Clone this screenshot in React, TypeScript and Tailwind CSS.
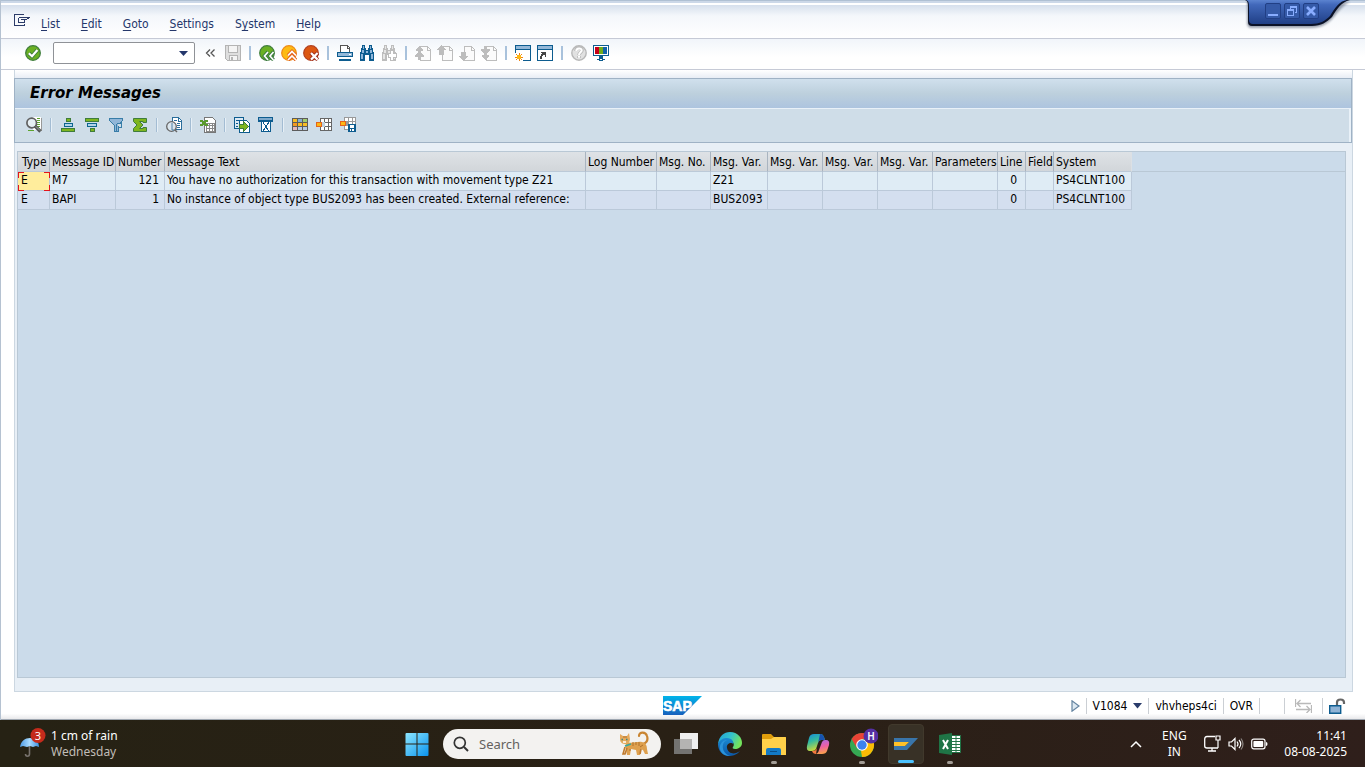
import React from "react";

const sapFont = "font-['DejaVu_Sans_Condensed','Liberation_Sans',sans-serif]";

type IconProps = { children: React.ReactNode; w?: number; h?: number; crisp?: boolean };

function Icon({ children, w = 16, h = 16, crisp = false }: IconProps) {
  return (
    <svg
      width={w}
      height={h}
      viewBox={`0 0 ${w} ${h}`}
      fill="none"
      shapeRendering={crisp ? "crispEdges" : "auto"}
      className="block shrink-0"
      aria-hidden="true"
    >
      {children}
    </svg>
  );
}

function ToolButton({ label, children, disabled }: { label: string; children: React.ReactNode; disabled?: boolean }) {
  return (
    <button type="button" aria-label={label} disabled={disabled} className="block size-4 shrink-0">
      {children}
    </button>
  );
}

function Separator() {
  return (
    <span className="flex w-1.5 shrink-0 justify-center">
      <span className="h-3.5 w-0.5 bg-[#a9c2dc]" />
    </span>
  );
}

function AppSeparator() {
  return <span className="h-3.5 w-0.5 shrink-0 border-r border-[#e6eff6] bg-[#a3bcd3]" />;
}

const Enter = () => (
  <Icon>
    <circle cx="8" cy="8" r="7.3" fill="#6ab023" stroke="#3f7d3c" strokeWidth="1.3" />
    <path d="M3.8 8.2 7 11.2 12.4 5" stroke="#3f7d3c" strokeWidth="4" />
    <path d="M3.8 8.2 7 11.2 12.4 5" stroke="#fff" strokeWidth="2.2" />
  </Icon>
);

const Save = () => (
  <Icon crisp>
    <path d="M.5.5h15v15h-13l-2-2z" fill="#dedede" stroke="#b4b4b4" />
    <path d="M3.500.5h9v7h-9z" fill="#f4f4f4" stroke="#b4b4b4" />
    <path d="M4.500 10.500h8v5h-8z" fill="#f4f4f4" stroke="#b4b4b4" />
    <path d="M6 12h2v3H6z" fill="#b4b4b4" />
  </Icon>
);

const Back = () => (
  <Icon>
    <circle cx="8" cy="8" r="7.3" fill="#6ab023" stroke="#3f7d3c" strokeWidth="1.2" />
    <path d="M9 7 5.5 11 9 15M14.5 7 11 11l3.5 4" stroke="#3a7a40" strokeWidth="3.6" />
    <path d="M9 7 5.5 11 9 15M14.5 7 11 11l3.5 4" stroke="#fff" strokeWidth="1.7" />
  </Icon>
);

const Exit = () => (
  <Icon>
    <circle cx="8" cy="8" r="7.3" fill="#fdbb12" stroke="#ee8a17" strokeWidth="1.2" />
    <path d="M7 10.5 11 6.5l4 4M7 15l4-4 4 4" stroke="#e4641c" strokeWidth="3.6" />
    <path d="M7 10.5 11 6.5l4 4M7 15l4-4 4 4" stroke="#fff" strokeWidth="1.7" />
  </Icon>
);

const Cancel = () => (
  <Icon>
    <circle cx="8" cy="8" r="7.3" fill="#dc5711" stroke="#b3401f" strokeWidth="1.2" />
    <path d="m7.8 7.8 7 7m0-7-7 7" stroke="#9c2b1b" strokeWidth="4" />
    <path d="m8 8 6.6 6.6m0-6.6L8 14.600" stroke="#fff" strokeWidth="2.2" />
  </Icon>
);

const Print = () => (
  <Icon crisp>
    <path d="M3.500 7V.5h7l2 2V7" fill="#fff" stroke="#555" />
    <path d="M10 1v2h2" stroke="#555" />
    <rect x="0.5" y="7.5" width="15" height="4" rx="1" fill="#94b8d8" stroke="#0d5c8f" />
    <path d="M12 9h2v1h-2z" fill="#fff" />
    <path d="M2 14h12v2H2z" fill="#0d5c8f" />
  </Icon>
);

function Binoculars({ c, f, more }: { c: string; f: string; more?: boolean }) {
  return (
    <Icon crisp>
      <path d="M3 0h3v3h1v2h2V3h1V0h3v3h1v4h1v9h-5v-6H6v6H1V7h1V3h1z" fill={c} />
      <path d="M4 1h1v3H4zM11 1h1v3h-1zM3 5h2v3H3zM11 5h2v3h-2zM2 9h2v5H2zM12 9h2v5h-2zM7 6h2v2H7z" fill={f} />
      {more && (
        <>
          <path d="M9 5h4v3h3v5h-3v3H9v-3H7V8h2z" fill={c} />
          <path d="M10 6h2v3h3v3h-3v3h-2v-3H8V9h2z" fill="#fff" />
        </>
      )}
    </Icon>
  );
}

const pageOutline = "M5.500 1.500h7l3 3v11h-10z";

function PageIcon({ up, down }: { up?: boolean; down?: boolean }) {
  return (
    <Icon crisp>
      <path d={pageOutline} fill="#fbfbfb" stroke="#bdbdbd" />
      <path d="M12 2v3h3" stroke="#bdbdbd" />
      {up && <path d="M4 0h1v1h1v1h1v1h1v1h1v1H7v5H2V5H0V4h1V3h1V2h1V1h1z" fill="#bdbdbd" />}
      {down && <path d="M4 16h1v-1h1v-1h1v-1h1v-1h1v-1H7V7H2v4H0v1h1v1h1v1h1v1h1z" fill="#bdbdbd" />}
    </Icon>
  );
}

function DoublePage({ down }: { down?: boolean }) {
  return (
    <Icon crisp>
      <path d={pageOutline} fill="#fbfbfb" stroke="#bdbdbd" />
      <path d="M12 2v3h3" stroke="#bdbdbd" />
      <path
        transform={down ? "matrix(1 0 0 -1 0 16)" : undefined}
        d="M4 1h1v1h1v1h1v1h1v2H6v2h1v1h1v1h1v2H6v3H3v-3H0v-2h1V9h1V8h1V6H1V4h1V3h1V2h1z"
        fill="#bdbdbd"
      />
    </Icon>
  );
}

const NewSession = () => (
  <Icon crisp>
    <path d="M.5.5h15v15H.5z" fill="#fff" stroke="#0d5c8f" />
    <path d="M1 1h14v3H1z" fill="#94b8d8" />
    <path d="M0 4h16v1H0z" fill="#0d5c8f" />
    <path d="M0 8h8v8H0z" fill="#fff" />
    <path d="M4 8v8M0 12h8M1 9l6 6M7 9l-6 6" stroke="#f08214" />
    <path d="M2 10h4v4H2z" fill="#fdb813" />
  </Icon>
);

const Shortcut = () => (
  <Icon crisp>
    <path d="M.5.5h15v15H.5z" fill="#fff" stroke="#0d5c8f" />
    <path d="M1 1h14v3H1z" fill="#94b8d8" />
    <path d="M0 4h16v1H0z" fill="#0d5c8f" />
    <path d="M4 7h5v5H8v-2H6v1H5v3H3v-3h1v-2h1V8H4z" fill="#454545" />
  </Icon>
);

const HelpIcon = () => (
  <Icon>
    <circle cx="8" cy="8" r="7.200" fill="#e1e1e1" stroke="#b8b8b8" strokeWidth="1.4" />
    <path d="M5 6c0-4 6-4 6-.8C11 7.400 8 7.300 8 10M8 11v2" stroke="#bbb" strokeWidth="3.600" />
    <path d="M5.300 6c0-3.200 5.400-3.200 5.400-.8C10.700 7.300 8 7.200 8 10M8 11v1.700" stroke="#fff" strokeWidth="2" />
  </Icon>
);

const Layout = () => (
  <Icon crisp>
    <path d="M0 0h16v11H0z" fill="#0d5c8f" />
    <path d="M1 1h14v9H1z" fill="#fff" />
    <path d="M2 2h4v7H2z" fill="#c60018" />
    <path d="M6 2h4v7H6z" fill="#70ac1b" />
    <path d="M10 2h4v7h-4z" fill="#1262a8" />
    <path d="M6 11h4v3H6zM4 14h3v1H4zM9 14h3v1H9zM6 15h4v1H6z" fill="#0d5c8f" />
  </Icon>
);

const Details = () => (
  <Icon>
    <g shapeRendering="crispEdges">
      <path d="M7 0h8v13H7z" fill="#fff" />
      <path d="M11 1.500h3M11 3.500h3M11 5.500h3M11 7.500h3M11 9.500h3M2 13.500h6" stroke="#5da32e" />
      <path d="M15.500 1v13" stroke="#999" />
    </g>
    <circle cx="5.700" cy="6" r="4.800" fill="#e6eff3" stroke="#606060" strokeWidth="1.700" />
    <path d="m9 9 5.500 5.500" stroke="#555" strokeWidth="3.400" />
    <path d="m10 9.500 4 4" stroke="#9bb0a0" />
  </Icon>
);

const SortAsc = () => (
  <Icon crisp>
    <path d="M6.500 1.500h4v3h-4z" fill="#7eb51f" stroke="#3f7d3c" />
    <path d="M4.500 6.500h8v3h-8z" fill="#b3d4e8" stroke="#0d668f" />
    <path d="M1.500 11.500h13v3h-13z" fill="#7eb51f" stroke="#3f7d3c" />
  </Icon>
);

const SortDesc = () => (
  <Icon crisp>
    <path d="M1.500 1.500h13v3h-13z" fill="#7eb51f" stroke="#3f7d3c" />
    <path d="M3.500 6.500h9v3h-9z" fill="#b3d4e8" stroke="#0d668f" />
    <path d="M6.500 11.500h4v3h-4z" fill="#7eb51f" stroke="#3f7d3c" />
  </Icon>
);

const Filter = () => (
  <Icon crisp>
    <path d="M1.500 1.500h13v2l-4 5v6h-4v-6l-5-5z" fill="#91b6d8" stroke="#387da8" />
    <path d="M9 6h4v4h-3v4M8 7v7" stroke="#387da8" />
    <path d="M10 7h2v2h-2z" fill="#cfdde8" />
  </Icon>
);

const Sum = () => (
  <Icon>
    <path d="M1.500 1.500h13v4h-3.500v-1H7.500l3.500 3.500-3.500 3.500H11v-1h3.500v4h-13v-3L5 8 1.500 4.500z" fill="#7eb51f" stroke="#3f7d3c" />
  </Icon>
);

const Preview = () => (
  <Icon>
    <g shapeRendering="crispEdges">
      <path d="M6.500.5h6l3 3v9h-9z" fill="#fff" stroke="#2b6e9c" />
      <path d="M12 1v3h3M8 3.500h3M11 6.500h3M11 8.500h3M11 10.500h3" stroke="#2b6e9c" />
    </g>
    <circle cx="5.500" cy="9.500" r="4.800" fill="#dbe6ee" stroke="#666" strokeWidth="1.300" />
    <path d="M6 6v7h2" stroke="#4e82a7" />
    <path d="m9 13 2 2" stroke="#666" strokeWidth="1.500" />
  </Icon>
);

const Spreadsheet = () => (
  <Icon crisp>
    <path d="M4.500.5h8l3 3v12h-11z" fill="#fff" stroke="#777" />
    <path d="M6 6h9v9H6z" fill="#888" />
    <path d="M7 7h2v1H7zM10 7h2v1h-2zM13 7h1v1h-1zM7 9h2v2H7zM10 9h2v2h-2zM13 9h1v2h-1zM7 12h2v2H7zM10 12h2v2h-2zM13 12h1v2h-1z" fill="#fff" />
    <path d="M0 3h3v1h2V3h3v2H6v2h2v2H5V8H3v1H0V7h2V5H0z" fill="#5a9a2d" />
  </Icon>
);

const Export = () => (
  <Icon crisp>
    <path d="M.5.5h9v11h-9z" fill="#dbe8f3" stroke="#0d5c8f" />
    <path d="M2 3.500h5M2 6.500h2M2 9.500h2" stroke="#0d5c8f" />
    <path d="M5.500 3.500h7l3 3v9h-10z" fill="#fff" stroke="#0d5c8f" />
    <path d="M5.500 7.500h4v-3l5 5-5 5v-3h-4z" fill="#7eb51f" stroke="#3f7d3c" />
  </Icon>
);

const Mail = () => (
  <Icon crisp>
    <path d="M0 0h15v5H0z" fill="#0d5c8f" />
    <path d="M1 1h13v2H1z" fill="#7ea9cc" />
    <path d="M3.500 4.500h9v10h-9z" fill="#fff" stroke="#0d5c8f" />
    <path d="m5 5 3 5 3-5M5 14l3-4 3 4" stroke="#0d5c8f" />
  </Icon>
);

const GridIcon = () => (
  <Icon crisp>
    <path d="M0 1h16v13H0z" fill="#5c5c5c" />
    <path d="M1 2h4v3H1zM6 6h4v3H6zM11 6h4v3h-4z" fill="#f9bd23" />
    <path d="M6 2h4v3H6z" fill="#89b1d0" />
    <path d="M11 2h4v3h-4z" fill="#a4cc6c" />
    <path d="M1 6h4v3H1z" fill="#f49920" />
    <path d="M1 10h4v3H1z" fill="#e8b9ba" />
    <path d="M6 10h4v3H6zM11 10h4v3h-4z" fill="#b9cbe0" />
  </Icon>
);

const ChooseGrid = () => (
  <Icon crisp>
    <path d="M4 1h12v13H4z" fill="#666" />
    <path d="M5 2h3v3H5zM9 2h3v3H9zM13 2h2v3h-2zM9 6h3v3H9zM13 6h2v3h-2zM5 10h3v3H5zM9 10h3v3H9zM13 10h2v3h-2z" fill="#fff" />
    <path d="M.5 5.500h5v4h-5z" fill="#fdb813" stroke="#e4641c" />
    <path d="M6 5h3v5H6z" fill="#bfd0de" />
  </Icon>
);

const SaveGrid = () => (
  <Icon crisp>
    <path d="M4 0h12v13H4z" fill="#999" />
    <path d="M5 1h3v3H5zM9 1h3v3H9zM13 1h2v3h-2zM9 5h3v3H9zM13 5h2v3h-2zM5 9h3v3H5zM9 9h3v3H9z" fill="#fff" />
    <path d="M.5 4.500h5v4h-5z" fill="#fdb813" stroke="#e4641c" />
    <path d="M8 7h8v8H8z" fill="#0d5c8f" />
    <path d="M10 8h4v3h-4zM10 12h1v2h-1zM12 12h2v2h-2z" fill="#fff" />
  </Icon>
);

function Tab() {
  return (
    <div className="absolute top-0 right-3.5 h-8 w-[106px]">
      <svg width="106" height="32" viewBox="0 0 106 32" className="block" aria-hidden="true">
        <defs>
          <linearGradient id="tab" x2="0" y2="1">
            <stop stopColor="#5b83d0" />
            <stop offset=".2" stopColor="#4168ba" />
            <stop offset="1" stopColor="#203f86" />
          </linearGradient>
          <filter id="soft" x="-10%" y="-10%" width="120%" height="140%">
            <feGaussianBlur stdDeviation="1.2" />
          </filter>
        </defs>
        <path d="M2 0v24q1 4 4 4h60c10 0 17-4 22-10 6-7 9-12 17-16z" fill="#6d7687" opacity=".65" filter="url(#soft)" />
        <path d="M0 0c3 1 3 4 3 7v15q0 4 4 4h60c9 0 15-4 20-9C92 9 96 2 105 0z" fill="#0b1228" />
        <path d="M1 0c3 1 3 4 3 7v13q0 4 4 4h58c9 0 14-3 19-8C90 8 94 1 102 0z" fill="url(#tab)" />
      </svg>
      <div className="absolute top-[3px] left-5 flex gap-[3px]">
        {["Minimize", "Restore", "Close"].map((name) => (
          <button key={name} type="button" aria-label={name} className="grid size-4 place-items-center rounded-xs border border-[#213f85] bg-[#355aa8]">
            <Icon w={12} h={12}>
              {name === "Minimize" && <path d="M1 10h10" stroke="#89adff" strokeWidth="2" />}
              {name === "Restore" && (
                <g shapeRendering="crispEdges" stroke="#89adff">
                  <path d="M1.500 4.500h6v6h-6zM1 5.500h7M4 1.500h7M4 2.500h7M10.500 1v7M9 7.500h2M4.500 2v2" />
                </g>
              )}
              {name === "Close" && <path d="m2 2 8 8m0-8-8 8" stroke="#89adff" strokeWidth="2.600" />}
            </Icon>
          </button>
        ))}
      </div>
    </div>
  );
}

const menus: [string, string, string][] = [
  ["", "L", "ist"],
  ["", "E", "dit"],
  ["", "G", "oto"],
  ["", "S", "ettings"],
  ["S", "y", "stem"],
  ["", "H", "elp"],
];

const columns: { title: string; width: string; right?: boolean }[] = [
  { title: "Type", width: "w-8" },
  { title: "Message ID", width: "w-[66px]" },
  { title: "Number", width: "w-[49px]", right: true },
  { title: "Message Text", width: "w-[421px]" },
  { title: "Log Number", width: "w-[71px]" },
  { title: "Msg. No.", width: "w-[54px]" },
  { title: "Msg. Var.", width: "w-[57px]" },
  { title: "Msg. Var.", width: "w-[55px]" },
  { title: "Msg. Var.", width: "w-[55px]" },
  { title: "Msg. Var.", width: "w-[55px]" },
  { title: "Parameters", width: "w-[65px]" },
  { title: "Line", width: "w-7", right: true },
  { title: "Field", width: "w-7" },
  { title: "System", width: "w-[78px]" },
];

const rows = [
  ["E", "M7", "121", "You have no authorization for this transaction with movement type Z21", "", "", "Z21", "", "", "", "", "0", "", "PS4CLNT100"],
  ["E", "BAPI", "1", "No instance of object type BUS2093 has been created. External reference:", "", "", "BUS2093", "", "", "", "", "0", "", "PS4CLNT100"],
];

function MessageTable() {
  return (
    <table className="table-fixed border-separate border-spacing-0 text-xs whitespace-nowrap text-black">
      <thead>
        <tr>
          {columns.map((c, i) => (
            <th
              key={i}
              scope="col"
              className={`${c.width} h-5 border-r border-b border-r-[#a9b4c0] border-b-[#bccad8] bg-linear-to-b from-[#dee2e6] to-[#d2d6da] p-0 pt-0.5 pl-0.5 text-left leading-[17px] font-normal first:pl-1 last:border-r-[#dce0e4]`}
            >
              {c.title}
            </th>
          ))}
        </tr>
      </thead>
      <tbody>
        {rows.map((r, ri) => (
          <tr key={ri} className={ri === 0 ? "bg-[#dfecf5]" : "bg-[#d4dfef]"}>
            {r.map((v, i) => (
              <td
                key={i}
                className={`h-[19px] border-r border-b border-[#bbc9d9] p-0 pb-0.5 leading-4 ${
                  columns[i].right ? (i === 2 ? "pr-[5px] text-right" : "pr-2 text-right") : i === 0 ? "pl-[3px]" : "pl-0.5"
                } ${ri === 0 && i === 0 ? "relative bg-[#ffed9c]" : ""}`}
              >
                {v}
                {ri === 0 && i === 0 && (
                  <svg width="32" height="19" className="absolute top-0 left-0 z-10" shapeRendering="crispEdges" fill="#e3141c" aria-hidden="true">
                    <path d="M0 0h6v1H1v5H0zM26 0h6v6h-1V1h-5zM32 19h-6v-1h5v-5h1zM0 19v-6h1v5h5v1z" />
                  </svg>
                )}
              </td>
            ))}
          </tr>
        ))}
      </tbody>
    </table>
  );
}

function StatusSep() {
  return <span className="h-4 w-px shrink-0 bg-[#cbcfd4]" />;
}

function StatusBar() {
  return (
    <footer className="grid h-7 shrink-0 grid-cols-[1fr_auto_1fr] items-center border-b border-[#9fa7b1] bg-linear-to-b from-white from-80% to-[#e9e9eb] text-xs text-black">
      <span />
      <svg width="40" height="20" viewBox="0 0 40 20" role="img" aria-label="SAP">
        <defs>
          <linearGradient id="sap" x2="0" y2="1">
            <stop stopColor="#00b4ea" />
            <stop offset="1" stopColor="#1760bd" />
          </linearGradient>
        </defs>
        <path d="M0 0h39L20 19H0z" fill="url(#sap)" />
        <text x="0" y="15" fill="#fff" stroke="#fff" strokeWidth=".6" fontSize="14" fontWeight="700" fontFamily="Liberation Sans, sans-serif">SAP</text>
      </svg>
      <div className="flex items-center justify-end gap-1.5 pr-[19px]">
        <Icon w={9} h={12}>
          <path d="M1 .8v10.400L8 6z" fill="#dce8f1" stroke="#6484a0" strokeWidth="1.200" />
        </Icon>
        <StatusSep />
        <button type="button" className="flex items-center gap-1.5">
          <span>V1084</span>
          <Icon w={9} h={6}>
            <path d="M0 0h9L4.500 5.500z" fill="#2a3c6b" />
          </Icon>
        </button>
        <StatusSep />
        <span>vhvheps4ci</span>
        <StatusSep />
        <span>OVR</span>
        <StatusSep />
        <span className="w-3" />
        <StatusSep />
        <span className="px-1">
          <Icon w={17} h={14}>
            <path d="M.5 0v8M2 4.500h14M5.500 1 2 4.500 5.500 8M16.500 6v8M1 10.500h14M11.500 7l3.500 3.500-3.500 3.500" stroke="#b9b9b9" strokeWidth="1.300" />
          </Icon>
        </span>
        <StatusSep />
        <Icon w={17} h={16}>
          <path d="M8 8V4.500q0-3 3.500-3T15 4.500V6" stroke="#666" strokeWidth="2.200" />
          <path d="M.7 7.700h11v7.500H.7z" fill="#8fb3d5" stroke="#0d5c8f" strokeWidth="1.400" />
        </Icon>
      </div>
    </footer>
  );
}

function TaskButton({ name, children, running, active }: { name: string; children: React.ReactNode; running?: boolean; active?: boolean }) {
  return (
    <button
      type="button"
      aria-label={name}
      className={`relative grid h-10 place-items-center ${active ? "mx-1 w-9 rounded border border-[#41392c] bg-[#383126]" : "w-11"}`}
    >
      {children}
      {running && <span className="absolute bottom-0 left-1/2 h-[3px] w-1.5 -translate-x-1/2 rounded-full bg-[#a29c95]" />}
      {active && <span className="absolute bottom-0 left-1/2 h-[3px] w-4 -translate-x-1/2 rounded-full bg-[#4cc2ff]" />}
    </button>
  );
}

function Cat() {
  return (
    <svg width="30" height="26" viewBox="0 0 30 26" fill="none" aria-hidden="true">
      <path d="M24 13c5-2 5-5 4-8-1-4-8-5-8 0" stroke="#c98532" strokeWidth="2.200" strokeLinecap="round" />
      <path d="M8 11c5 2 10-1 15 0 4 1 5 4 5 7l1 5h-3l-2-4-3-1v6h-3l-1-5-5-1-1 6H8l-1-6c-1-2-1-5 1-7z" fill="#dea04e" />
      <path d="m8 17-2 6H4l2-7M22 18l-1 5" stroke="#c07a2c" strokeWidth="1.600" />
      <path d="m1 3 3 2h4l2-3 1 6c0 4-3 5-5 5s-5-1-5-5z" fill="#e5aa5c" />
      <path d="M14 11v4M17 11v3M20 11v4M5 5v2M7 5v2M24 14l-3 2M10 19h2" stroke="#b0702b" />
      <path d="M2.500 8.500H4M7 8.500h1.500" stroke="#3b8484" strokeWidth="1.500" />
      <path d="M4 11h3" stroke="#fff" strokeWidth="1.500" />
      <path d="m6 15 6-2" stroke="#35a9a0" strokeWidth="1.500" />
    </svg>
  );
}

function Taskbar() {
  return (
    <nav
      aria-label="Taskbar"
      className="grid h-[47px] shrink-0 grid-cols-[1fr_auto_1fr] items-center bg-linear-to-r from-[#262214] via-[#292015] to-[#2f1f1b] font-['Noto_Sans','Open_Sans',sans-serif] text-xs leading-4 text-white"
    >
      <button type="button" className="flex items-center gap-1 pl-5 text-left">
        <svg width="27" height="32" viewBox="0 0 27 32" aria-hidden="true">
          <defs>
            <linearGradient id="umb">
              <stop stopColor="#4d9be5" />
              <stop offset=".5" stopColor="#a9dbff" />
              <stop offset="1" stopColor="#3d91e2" />
            </linearGradient>
          </defs>
          <path d="M9.500 17v9c0 3-4 3-4 0" stroke="#77726d" strokeWidth="1.600" fill="none" />
          <path d="M0 19c1-6 5-9 10-9s9 3 9 9l-3-1-3 1-3-1-3 1-4-1z" fill="url(#umb)" />
          <circle cx="18" cy="7.500" r="7.500" fill="#c42b1c" />
          <text x="18" y="11.500" textAnchor="middle" fill="#fff" fontSize="11">3</text>
        </svg>
        <span>
          <span className="block">1 cm of rain</span>
          <span className="block text-[#c1bdb7]">Wednesday</span>
        </span>
      </button>

      <div className="flex items-center pl-0.5">
        <TaskButton name="Start">
          <svg width="24" height="24" viewBox="0 0 24 24" aria-hidden="true">
            <defs>
              <linearGradient id="win" x2="1" y2="1">
                <stop stopColor="#8de6ff" />
                <stop offset="1" stopColor="#0a93ee" />
              </linearGradient>
            </defs>
            <path
              d="M1.500 1H11.500V11.500H.5V2q0-1 1-1zM12.500 1H22.500q1 0 1 1V11.500H12.500zM.5 12.500h11V24h-10q-1 0-1-1zM12.500 12.500h11V23q0 1-1 1h-10z"
              fill="url(#win)"
            />
          </svg>
        </TaskButton>
        <label className="mr-[3px] ml-1 flex h-[30px] w-[218px] items-center gap-2.5 rounded-full bg-[#f3f2f0] pr-3 pl-2.5">
          <Icon>
            <circle cx="6.800" cy="6.800" r="5.500" stroke="#333" strokeWidth="1.700" />
            <path d="m11 11 4 4" stroke="#333" strokeWidth="1.900" />
          </Icon>
          <input
            type="text"
            aria-label="Search"
            placeholder="Search"
            className="min-w-0 flex-1 bg-transparent text-[13px] outline-none placeholder:text-[#64615e]"
          />
          <Cat />
        </label>
        <TaskButton name="Task view">
          <Icon w={24} h={24}>
            <path d="M6 1h18v16H6z" fill="#efefef" />
            <path d="M0 7h18v15H0z" fill="#747371" />
            <path d="M6 7h12v10H6z" fill="#b4b3b2" />
          </Icon>
        </TaskButton>
        <TaskButton name="Edge">
          <Icon w={24} h={24}>
            <defs>
              <linearGradient id="eg" x2="1" y2=".4">
                <stop stopColor="#1f9ed8" />
                <stop offset=".55" stopColor="#34c3cc" />
                <stop offset="1" stopColor="#73e35c" />
              </linearGradient>
              <linearGradient id="eb" x2="0" y2="1">
                <stop stopColor="#1b8ad2" />
                <stop offset="1" stopColor="#0b57a8" />
              </linearGradient>
            </defs>
            <path d="M0 12C1 4 6 0 12 0c8 0 12 6 12 11 0 4-4 6-7 6-2 0-3-1-2-2 4-6-8-12-15-3z" fill="url(#eg)" />
            <path d="M0 12C2 7 6 6 9 6c5 0 7 4 6 6-1-2-7-1-6 4 1 6 8 7 13 3-3 4-8 5-11 5C4 24 0 18 0 12z" fill="url(#eb)" />
            <path d="M9 8c-6 2-6 13 3 16C4 24 1 18 2 14c1-4 4-6 7-6z" fill="#2a93da" />
          </Icon>
        </TaskButton>
        <TaskButton name="File Explorer" running>
          <Icon w={24} h={24}>
            <path d="M0 3q0-1 1-1h8l3 3h12v4H0z" fill="#df9d0b" />
            <path d="M0 7h9l3-2h11q1 0 1 1v17H0z" fill="#ffd04a" />
            <path d="M4 23v-5q0-2 2-2h11q2 0 2 2v5z" fill="#137ac6" />
            <path d="M8 19h7v1H8z" fill="#0a4e87" />
          </Icon>
        </TaskButton>
        <TaskButton name="Copilot">
          <Icon w={24} h={24}>
            <defs>
              <linearGradient id="ca" x2=".4" y2="1">
                <stop stopColor="#1689de" />
                <stop offset=".45" stopColor="#32b9a0" />
                <stop offset="1" stopColor="#d6db35" />
              </linearGradient>
              <linearGradient id="cb" x2=".2" y2="1">
                <stop stopColor="#a56be9" />
                <stop offset=".55" stopColor="#ef60a2" />
                <stop offset="1" stopColor="#f99b51" />
              </linearGradient>
            </defs>
            <path d="M8 2h7q2 0 3 3l1 3h-4q-2 0-3 3l-2 6q-1 2-4 2H4q-4 0-3-5l2-8q1-4 5-4z" fill="url(#ca)" />
            <path d="M16 22H9q3 0 4-4l3-8q1-2 3-2h1q4 0 3 5l-2 6q-1 3-5 3z" fill="url(#cb)" />
            <path d="M14 2q3 0 4 3l1 3h-4q-2 0-3 3z" fill="#1752b0" />
            <path d="M10 22q-3 0-4-3h1q3 0 4-3z" fill="#f4793f" />
          </Icon>
        </TaskButton>
        <TaskButton name="Chrome" running>
          <svg width="32" height="32" viewBox="0 0 32 32" aria-hidden="true">
            <circle cx="16" cy="17" r="12" fill="#35a853" />
            <path d="M26.400 11A12 12 0 0 1 16 29l-1-6 6-6-1-6z" fill="#fbbc05" />
            <path d="M5.600 11 11 20l5-9h10.400A12 12 0 0 0 5.600 11z" fill="#e94335" />
            <circle cx="16" cy="17" r="5.800" fill="#fff" />
            <circle cx="16" cy="17" r="4.700" fill="#3b82ef" />
            <circle cx="25" cy="8" r="7.500" fill="#5530a4" />
            <text x="25" y="11.500" textAnchor="middle" fill="#fff" fontSize="10" fontWeight="600">H</text>
          </svg>
        </TaskButton>
        <TaskButton name="SAP Logon" active>
          <Icon w={24} h={14}>
            <path d="M0 1h24L13 13H0V9h11l4-4H0z" fill="#3975aa" />
            <path d="M0 5h15l-4 4H0z" fill="#ffc129" />
          </Icon>
        </TaskButton>
        <TaskButton name="Excel" running>
          <Icon w={24} h={24}>
            <path d="M12 3.500h10.500v17H12z" fill="#fff" stroke="#207245" />
            <path d="M13 6.500h9M13 9.500h9M13 12.500h9M13 15.500h9M13 18.500h9" stroke="#207245" />
            <path d="M18 4v16" stroke="#207245" />
            <path d="m1 3 13-2v22L1 21z" fill="#1f7446" />
            <path d="m5 8 5 9m0-9-5 9" stroke="#fff" strokeWidth="2" />
          </Icon>
        </TaskButton>
      </div>

      <div className="flex items-center justify-end pr-[18px]">
        <button type="button" aria-label="Show hidden icons" className="mr-[18px]">
          <Icon w={12} h={8}>
            <path d="m1 7 5-5 5 5" stroke="#fff" strokeWidth="1.500" />
          </Icon>
        </button>
        <button type="button" className="mr-4 w-7 text-center">
          ENG
          <br />
          IN
        </button>
        <button type="button" aria-label="Network, volume and battery" className="mr-4 flex items-center gap-[7px]">
          <Icon w={17} h={17}>
            <path d="M11 1.500H3Q.7 1.500.7 4v7q0 2 2.300 2h11M8 13v3M4 16h8" stroke="#fff" strokeWidth="1.300" />
            <path d="M12 1h4v4h-4zM14 5v8" stroke="#fff" strokeWidth="1.200" />
          </Icon>
          <Icon w={16} h={14}>
            <path d="M1 5h2.500L7 1.500v11L3.500 9H1zM9 4.500q2 2.500 0 5M11 3q3.500 4 0 8" stroke="#fff" strokeWidth="1.200" />
            <path d="M13 1.500q4 5.500 0 11" stroke="#8b8580" strokeWidth="1.200" />
          </Icon>
          <Icon w={17} h={12}>
            <rect x=".7" y="1.200" width="13.300" height="9.600" rx="2" stroke="#fff" strokeWidth="1.200" />
            <rect x="2.400" y="3" width="9.800" height="6" rx=".8" fill="#fff" />
            <path d="M15 4q1.500 0 1.500 2T15 8z" fill="#fff" />
          </Icon>
        </button>
        <button type="button" className="text-right">
          11:41
          <br />
          08-08-2025
        </button>
      </div>
    </nav>
  );
}

export default function App() {
  return (
    <div className="flex min-h-screen flex-col">
      <div className={`relative flex flex-1 flex-col border-l border-[#b5c2d1] bg-white text-xs ${sapFont}`}>
        <Tab />
        <header>
          <div className="border-t border-[#afc0d3] bg-linear-to-b from-[#cbd7e7] via-[#f4f7fb] via-40% to-white">
            <div className="h-0.5 bg-[#ccd8e8]" />
            <nav aria-label="Menu" className="flex h-[35px] items-center gap-[21px] border-t-2 border-white pl-[13px] text-[#25376b]">
              <button type="button" aria-label="System menu" className="-mr-2.5 pb-1">
                <Icon w={16} h={12} crisp>
                  <path d="M10 .5H.5v11h10v-2M5 3.500h10.500l-3 2H11l-1 3H4.500v-5M7 5.500h3" stroke="#2c3c69" />
                </Icon>
              </button>
              {menus.map(([a, b, c]) => (
                <button key={b + c} type="button" className="pt-[5px]">
                  {a}
                  <span className="underline underline-offset-2">{b}</span>
                  {c}
                </button>
              ))}
            </nav>
          </div>
          <div className="flex h-8 items-center gap-1.5 border-y border-[#c6cad6] bg-linear-to-b from-[#f1f5fa] to-white to-60% pb-0.5 pl-6">
            <ToolButton label="Enter"><Enter /></ToolButton>
            <div className="mr-0.5 ml-1.5 flex h-[22px] w-[142px] items-center rounded-xs border border-[#8f9297] bg-white">
              <input type="text" aria-label="Command" className="h-full min-w-0 flex-1 px-1 outline-none" />
              <button type="button" aria-label="Command history" className="px-1.5">
                <Icon w={9} h={5}>
                  <path d="M0 0h9L4.500 5z" fill="#24376c" />
                </Icon>
              </button>
            </div>
            <ToolButton label="Collapse">
              <Icon>
                <path d="M7 4.500 3.500 8 7 11.500M11.500 4.500 8 8l3.500 3.500" stroke="#555" strokeWidth="1.300" />
              </Icon>
            </ToolButton>
            <ToolButton label="Save" disabled><Save /></ToolButton>
            <Separator />
            <ToolButton label="Back"><Back /></ToolButton>
            <ToolButton label="Exit"><Exit /></ToolButton>
            <ToolButton label="Cancel"><Cancel /></ToolButton>
            <Separator />
            <ToolButton label="Print"><Print /></ToolButton>
            <ToolButton label="Find"><Binoculars c="#0d5c8f" f="#8fb5d9" /></ToolButton>
            <ToolButton label="Find next" disabled><Binoculars c="#bdbdbd" f="#e6e6e6" more /></ToolButton>
            <Separator />
            <ToolButton label="First page" disabled><DoublePage /></ToolButton>
            <ToolButton label="Previous page" disabled><PageIcon up /></ToolButton>
            <ToolButton label="Next page" disabled><PageIcon down /></ToolButton>
            <ToolButton label="Last page" disabled><DoublePage down /></ToolButton>
            <Separator />
            <ToolButton label="New session"><NewSession /></ToolButton>
            <ToolButton label="Create shortcut"><Shortcut /></ToolButton>
            <Separator />
            <ToolButton label="Help" disabled><HelpIcon /></ToolButton>
            <ToolButton label="Customize layout"><Layout /></ToolButton>
          </div>
        </header>

        <main className="mr-3 ml-[13px] flex flex-1 flex-col border-x border-b border-[#ccd7e1] bg-[#e8eff6]">
          <div className="h-2 bg-linear-to-b from-white to-[#e8edf5]" />
          <div className="-ml-px border border-[#9fb2c5] bg-[#cfdde8]">
            <h1 className="h-[30px] border-b border-[#e9f1f8] bg-linear-to-b from-[#d0e0ed] via-[#bdd0dd] via-50% to-[#adc4df] pl-[15px] font-['DejaVu_Sans',sans-serif] text-[15px] leading-7 font-bold text-black italic">
              Error Messages
            </h1>
            <div role="toolbar" aria-label="List functions" className="flex h-[33px] items-center gap-2 border-r-2 border-[#e9f1f8] pb-0.5 pl-[11px]">
              <ToolButton label="Details"><Details /></ToolButton>
              <AppSeparator />
              <ToolButton label="Sort ascending"><SortAsc /></ToolButton>
              <ToolButton label="Sort descending"><SortDesc /></ToolButton>
              <ToolButton label="Filter"><Filter /></ToolButton>
              <ToolButton label="Total"><Sum /></ToolButton>
              <AppSeparator />
              <ToolButton label="Print preview"><Preview /></ToolButton>
              <AppSeparator />
              <ToolButton label="Spreadsheet"><Spreadsheet /></ToolButton>
              <AppSeparator />
              <ToolButton label="Local file"><Export /></ToolButton>
              <ToolButton label="Mail recipient"><Mail /></ToolButton>
              <AppSeparator />
              <ToolButton label="Change layout"><GridIcon /></ToolButton>
              <ToolButton label="Select layout"><ChooseGrid /></ToolButton>
              <ToolButton label="Save layout"><SaveGrid /></ToolButton>
            </div>
          </div>
          <div className="mt-2 mr-1.5 mb-[13px] ml-0.5 flex-1 border border-[#b9c8d5] bg-[#cbdbea]">
            <div className="flex">
              <MessageTable />
              <div className="h-5 flex-1 border-b border-[#b9c8d5]" />
            </div>
          </div>
        </main>
        <StatusBar />
      </div>
      <Taskbar />
    </div>
  );
}
